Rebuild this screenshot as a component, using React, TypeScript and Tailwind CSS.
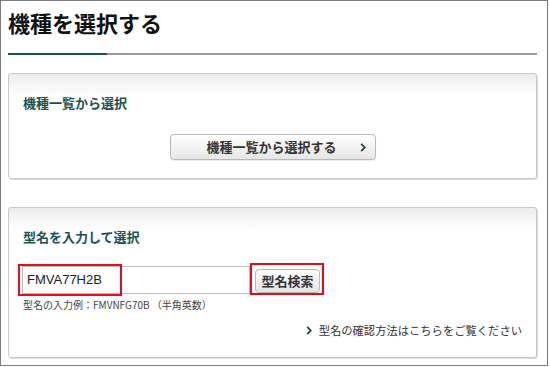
import * as React from "react";

const jp = { fontFamily: '"Noto Sans CJK JP", "Noto Sans", sans-serif' };

const Chevron: React.FC<{ className?: string }> = ({ className }) => (
	<svg viewBox="0 0 6 10" className={className} fill="none">
		<path d="M1 1l4 4-4 4" stroke="#1d4f45" strokeWidth="2" />
	</svg>
);

const Card: React.FC<{ title: string; className?: string; children: React.ReactNode }> = ({
	title,
	className,
	children,
}) => (
	<div
		className={`rounded-[3px] border border-[#c9c9c9] bg-gradient-to-b from-[#ececec] via-white via-[22px] to-white shadow-[1px_1px_0_#dcdcdc] pl-[14px] pr-[14px] ${className ?? ""}`}
	>
		<h2 className="text-[13px] font-bold leading-[13px] text-[#1e5250]">{title}</h2>
		{children}
	</div>
);

export default function App() {
	return (
		<div className="h-[367px] w-[550px] bg-white" style={jp}>
			<div className="h-[366px] w-[548px] border border-[#7d7d7d] pl-[7px] pr-[10px]">
				<h1 className="pt-[10px] text-[22px] font-bold leading-[22px] text-[#111]">機種を選択する</h1>
				<div className="mt-[20px] flex h-[2px]">
					<div className="w-[99px] bg-[#1b5446]" />
					<div className="flex-1 bg-[#9c9c96]" />
				</div>

				<Card title="機種一覧から選択" className="mt-[18px] h-[106px] pt-[22px]">
					<div className="mt-[25px] flex justify-center">
						<button className="flex h-[26px] w-[206px] items-center rounded-[4px] border border-[#b8b8b8] bg-gradient-to-b from-white to-[#e6e6e6] pl-[36px] pr-[9px] shadow-[0_1px_1px_rgba(0,0,0,0.08)]">
							<span className="text-[13px] font-bold text-[#333]">機種一覧から選択する</span>
							<Chevron className="ml-auto h-[9px] w-[6px]" />
						</button>
					</div>
				</Card>

				<Card title="型名を入力して選択" className="mt-[28px] h-[151px] pt-[22px]">
					<div className="mt-[23px] flex items-center">
						<div className="relative -ml-[1px]">
							<div
								className="flex h-[28px] w-[228px] items-center border border-[#bcbcbc] pl-[4px] text-[13px] text-[#222]"
								style={{ fontFamily: '"Liberation Sans", Arial, sans-serif' }}
							>
								FMVA77H2B
							</div>
							<div className="absolute -left-[4px] -top-[2px] h-[32px] w-[104px] border-2 border-[#e60b19]" />
						</div>
						<div className="relative ml-[5px]">
							<button className="h-[24px] w-[65px] rounded-[4px] border border-[#b8b8b8] bg-gradient-to-b from-white to-[#e4e4e4] text-[13px] font-bold text-[#333]">
								型名検索
							</button>
							<div className="absolute -left-[5px] -top-[4px] h-[32px] w-[74px] border-2 border-[#e60b19]" />
						</div>
					</div>
					<p className="mt-[6px] text-[10px] leading-[10px] text-[#444]">型名の入力例：FMVNFG70B （半角英数）</p>
					<div className="mt-[14px] flex items-center justify-end pr-[0px]">
						<Chevron className="h-[9px] w-[6px]" />
						<span className="ml-[7px] text-[11.3px] leading-[12px] text-[#333]">型名の確認方法はこちらをご覧ください</span>
					</div>
				</Card>
			</div>
		</div>
	);
}
